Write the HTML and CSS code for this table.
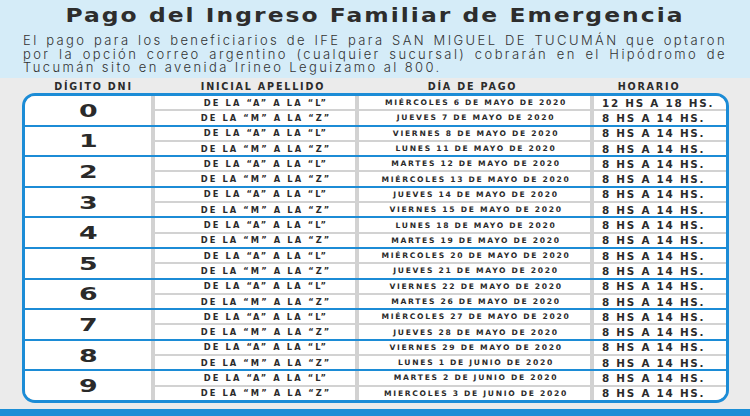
FILE: index.html
```html
<!DOCTYPE html>
<html lang="es">
<head>
<meta charset="utf-8">
<title>Pago del Ingreso Familiar de Emergencia</title>
<link rel="stylesheet" href="styles.css">
</head>
<body>
<div class="page">
  <header class="top">
    <h1 class="title"><span>Pago del Ingreso Familiar de Emergencia</span></h1>
    <p class="intro">
      <span class="line just">El pago para los beneficiarios de IFE para SAN MIGUEL DE TUCUMÁN que optaron</span>
      <span class="line just">por la opción correo argentino (cualquier sucursal) cobrarán en el Hipódromo de</span>
      <span class="line">Tucumán sito en avenida Irineo Leguizamo al 800.</span>
    </p>
  </header>
  <main class="main">
    <div class="head">
      <div class="h h-digit">DÍGITO DNI</div>
      <div class="h h-ini">INICIAL APELLIDO</div>
      <div class="h h-date">DÍA DE PAGO</div>
      <div class="h h-time">HORARIO</div>
    </div>
    <div class="table">
      <div class="group">
        <div class="digit"><span>0</span></div>
        <div class="ini">DE LA “A” A LA “L”</div><div class="date">MIÉRCOLES 6 DE MAYO DE 2020</div><div class="time">12 HS A 18 HS.</div>
        <div class="ini">DE LA “M” A LA “Z”</div><div class="date">JUEVES 7 DE MAYO DE 2020</div><div class="time">8 HS A 14 HS.</div>
      </div>
      <div class="group">
        <div class="digit"><span>1</span></div>
        <div class="ini">DE LA “A” A LA “L”</div><div class="date">VIERNES 8 DE MAYO DE 2020</div><div class="time">8 HS A 14 HS.</div>
        <div class="ini">DE LA “M” A LA “Z”</div><div class="date">LUNES 11 DE MAYO DE 2020</div><div class="time">8 HS A 14 HS.</div>
      </div>
      <div class="group">
        <div class="digit"><span>2</span></div>
        <div class="ini">DE LA “A” A LA “L”</div><div class="date">MARTES 12 DE MAYO DE 2020</div><div class="time">8 HS A 14 HS.</div>
        <div class="ini">DE LA “M” A LA “Z”</div><div class="date">MIÉRCOLES 13 DE MAYO DE 2020</div><div class="time">8 HS A 14 HS.</div>
      </div>
      <div class="group">
        <div class="digit"><span>3</span></div>
        <div class="ini">DE LA “A” A LA “L”</div><div class="date">JUEVES 14 DE MAYO DE 2020</div><div class="time">8 HS A 14 HS.</div>
        <div class="ini">DE LA “M” A LA “Z”</div><div class="date">VIERNES 15 DE MAYO DE 2020</div><div class="time">8 HS A 14 HS.</div>
      </div>
      <div class="group">
        <div class="digit"><span>4</span></div>
        <div class="ini">DE LA “A” A LA “L”</div><div class="date">LUNES 18 DE MAYO DE 2020</div><div class="time">8 HS A 14 HS.</div>
        <div class="ini">DE LA “M” A LA “Z”</div><div class="date">MARTES 19 DE MAYO DE 2020</div><div class="time">8 HS A 14 HS.</div>
      </div>
      <div class="group">
        <div class="digit"><span>5</span></div>
        <div class="ini">DE LA “A” A LA “L”</div><div class="date">MIÉRCOLES 20 DE MAYO DE 2020</div><div class="time">8 HS A 14 HS.</div>
        <div class="ini">DE LA “M” A LA “Z”</div><div class="date">JUEVES 21 DE MAYO DE 2020</div><div class="time">8 HS A 14 HS.</div>
      </div>
      <div class="group">
        <div class="digit"><span>6</span></div>
        <div class="ini">DE LA “A” A LA “L”</div><div class="date">VIERNES 22 DE MAYO DE 2020</div><div class="time">8 HS A 14 HS.</div>
        <div class="ini">DE LA “M” A LA “Z”</div><div class="date">MARTES 26 DE MAYO DE 2020</div><div class="time">8 HS A 14 HS.</div>
      </div>
      <div class="group">
        <div class="digit"><span>7</span></div>
        <div class="ini">DE LA “A” A LA “L”</div><div class="date">MIÉRCOLES 27 DE MAYO DE 2020</div><div class="time">8 HS A 14 HS.</div>
        <div class="ini">DE LA “M” A LA “Z”</div><div class="date">JUEVES 28 DE MAYO DE 2020</div><div class="time">8 HS A 14 HS.</div>
      </div>
      <div class="group">
        <div class="digit"><span>8</span></div>
        <div class="ini">DE LA “A” A LA “L”</div><div class="date">VIERNES 29 DE MAYO DE 2020</div><div class="time">8 HS A 14 HS.</div>
        <div class="ini">DE LA “M” A LA “Z”</div><div class="date">LUNES 1 DE JUNIO DE 2020</div><div class="time">8 HS A 14 HS.</div>
      </div>
      <div class="group">
        <div class="digit"><span>9</span></div>
        <div class="ini">DE LA “A” A LA “L”</div><div class="date">MARTES 2 DE JUNIO DE 2020</div><div class="time">8 HS A 14 HS.</div>
        <div class="ini">DE LA “M” A LA “Z”</div><div class="date">MIERCOLES 3 DE JUNIO DE 2020</div><div class="time">8 HS A 14 HS.</div>
      </div>
    </div>
  </main>
  <footer class="bar"></footer>
</div>
</body>
</html>
```

FILE: styles.css
```css
* { box-sizing: border-box; }
html, body { margin: 0; padding: 0; }
body {
  width: 750px;
  height: 416px;
  overflow: hidden;
  background: #ebebeb;
  color: #2b2b2b;
  font-family: "DejaVu Sans", "Liberation Sans", sans-serif;
}
.page { display: flex; flex-direction: column; height: 416px; }

.top {
  background: #d5ecf8;
  height: 78px;
  padding: 4px 23px 0 23px;
}
.title {
  margin: 0;
  text-align: center;
  font-size: 19.5px;
  line-height: 24px;
  font-weight: 700;
  letter-spacing: 1.7px;
  color: #2d2d2d;
}
.title span { display: inline-block; transform: scaleX(1.2); }
.intro {
  margin: 6px 0 0 0;
  font-family: "Inter", "Open Sans", sans-serif;
  font-weight: 300;
  font-size: 13px;
  line-height: 13.5px;
  color: #333;
  letter-spacing: 2.4px;
}
.line { display: block; white-space: nowrap; }
.just { text-align: justify; text-align-last: justify; }

.main {
  flex: 1;
  padding: 0 0 0 22px;
}
.head {
  display: grid;
  grid-template-columns: 129px 204px 235px 136px;
  height: 15px;
  align-items: center;
  font-size: 9.6px;
  font-weight: 700;
  letter-spacing: 1.8px;
  color: #2b2b2b;
}
.h { text-align: center; line-height: 15px; padding-top: 1px; }
.h-digit { padding-left: 14px; }
.h-ini { padding-left: 20px; }
.h-time { padding-right: 18px; }

.table {
  width: 707px;
  border: 3px solid #1c8cd6;
  border-radius: 13px;
  overflow: hidden;
  background: #fff;
}
.group {
  display: grid;
  grid-template-columns: 126px 200px 231px 1fr;
  grid-auto-rows: 13.3px;
  column-gap: 4px;
  row-gap: 2px;
  background: #d2d2d2;
  border-top: 2px solid #1c8cd6;
}
.group:first-child { border-top: 0; }
.group > div {
  background: #fff;
  display: flex;
  align-items: center;
  white-space: nowrap;
  font-weight: 700;
}
.digit {
  grid-row: span 2;
  justify-content: center;
  font-size: 18.5px;
  color: #2a2a2a;
}
.digit span { display: inline-block; transform: scaleX(1.45); }
.ini {
  justify-content: center;
  padding-left: 22px;
  font-size: 8.3px;
  letter-spacing: 2.1px;
}
.date {
  justify-content: center;
  padding-left: 3px;
  font-size: 7.6px;
  letter-spacing: 1.7px;
}
.time {
  padding-left: 8px;
  font-size: 10.4px;
  letter-spacing: 1.75px;
}

.bar {
  height: 7px;
  background: #1b8ed6;
}
```
